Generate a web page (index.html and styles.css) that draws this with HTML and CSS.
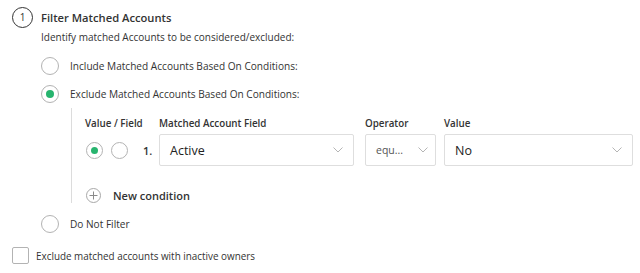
FILE: index.html
```html
<!DOCTYPE html>
<html lang="en">
<head>
  <meta charset="UTF-8">
  <meta name="viewport" content="width=device-width, initial-scale=1.0">
  <title>Filter Matched Accounts</title>
  <link rel="stylesheet" href="styles.css">
</head>
<body>
  <div class="painel">
    <div class="passo">
      <span class="numero">1</span>
      <b class="titulo">Filter Matched Accounts</b>
    </div>
    <p class="descricao">Identify matched Accounts to be considered/excluded:</p>

    <div class="opcoes">
      <label class="opcao">
        <span class="radio"></span>
        <span>Include Matched Accounts Based On Conditions:</span>
      </label>
      <label class="opcao">
        <span class="radio marcado"></span>
        <span>Exclude Matched Accounts Based On Conditions:</span>
      </label>
    </div>

    <div class="condicoes">
      <div class="linha rotulos">
        <span class="col-tipo">Value / Field</span>
        <span class="col-campo">Matched Account Field</span>
        <span class="col-operador">Operator</span>
        <span class="col-valor">Value</span>
      </div>
      <div class="linha">
        <div class="col-tipo tipo">
          <span class="radio pequeno marcado"></span>
          <span class="radio pequeno"></span>
          <b class="indice">1.</b>
        </div>
        <div class="col-campo select">
          <span>Active</span>
          <svg class="seta" width="10" height="6" viewBox="0 0 10 6"><polyline points="0.5,0.5 5,5 9.5,0.5" fill="none" stroke="#b5b5b5" stroke-width="1"/></svg>
        </div>
        <div class="col-operador select curto">
          <span>equ...</span>
          <svg class="seta" width="10" height="6" viewBox="0 0 10 6"><polyline points="0.5,0.5 5,5 9.5,0.5" fill="none" stroke="#b5b5b5" stroke-width="1"/></svg>
        </div>
        <div class="col-valor select">
          <span>No</span>
          <svg class="seta" width="10" height="6" viewBox="0 0 10 6"><polyline points="0.5,0.5 5,5 9.5,0.5" fill="none" stroke="#b5b5b5" stroke-width="1"/></svg>
        </div>
      </div>
      <div class="nova">
        <svg class="mais" width="15" height="15" viewBox="0 0 15 15">
          <circle cx="7.5" cy="7.5" r="7" fill="none" stroke="#a8a8a8" stroke-width="1"/>
          <line x1="7.5" y1="3.5" x2="7.5" y2="11.5" stroke="#8a8a8a" stroke-width="1"/>
          <line x1="3.5" y1="7.5" x2="11.5" y2="7.5" stroke="#8a8a8a" stroke-width="1"/>
        </svg>
        <b>New condition</b>
      </div>
    </div>

    <div class="opcoes">
      <label class="opcao">
        <span class="radio"></span>
        <span>Do Not Filter</span>
      </label>
    </div>

    <label class="caixa-check">
      <span class="check"></span>
      <span>Exclude matched accounts with inactive owners</span>
    </label>
  </div>
</body>
</html>
```

FILE: styles.css
```css
body {
  margin: 0;
  font-family: "Open Sans", Arial, Helvetica, sans-serif;
  color: #333;
  background-color: #fff;
}
.painel {
  padding: 7px 0 0 12px;
}
.passo {
  display: flex;
  align-items: center;
  gap: 8px;
  height: 20px;
}
.numero {
  width: 19px;
  height: 19px;
  border: 1px solid #333;
  border-radius: 50%;
  display: flex;
  align-items: center;
  justify-content: center;
  font-size: 10px;
}
.titulo {
  font-size: 11.2px;
  font-weight: 600;
}
.descricao {
  margin: 2px 0 0 29px;
  font-size: 10px;
  line-height: 16px;
}
.opcoes {
  margin: 12px 0 0 29px;
  display: flex;
  flex-direction: column;
  gap: 10px;
}
.opcao {
  display: flex;
  align-items: center;
  gap: 11px;
  font-size: 10.1px;
  height: 18px;
}
.radio {
  box-sizing: border-box;
  width: 18px;
  height: 18px;
  border: 1px solid #b3b3b3;
  border-radius: 50%;
  display: flex;
  align-items: center;
  justify-content: center;
  background: #fff;
}
.radio.marcado::after {
  content: "";
  width: 8px;
  height: 8px;
  border-radius: 50%;
  background-color: #27b46e;
}
.radio.pequeno {
  width: 17px;
  height: 17px;
}
.radio.pequeno.marcado::after {
  width: 7px;
  height: 7px;
}
.condicoes {
  margin: 5px 0 0 59px;
  border-left: 1px solid #dcdcdc;
  padding: 8px 0 0 13px;
}
.linha {
  display: flex;
  align-items: center;
}
.rotulos {
  font-size: 9.8px;
  font-weight: 600;
  line-height: 16px;
  margin-bottom: 2px;
  color: #333;
}
.col-tipo {
  width: 74px;
}
.col-campo {
  width: 195px;
  margin-right: 11px;
}
.col-operador {
  width: 71px;
  margin-right: 8px;
}
.col-valor {
  width: 189px;
}
.tipo {
  display: flex;
  align-items: center;
  gap: 8px;
  padding-left: 1px;
  box-sizing: border-box;
}
.indice {
  font-size: 11px;
  font-weight: 600;
  margin-left: 7px;
}
.select {
  box-sizing: border-box;
  height: 32px;
  border: 1px solid #dedede;
  border-radius: 2px;
  display: flex;
  align-items: center;
  justify-content: space-between;
  padding: 0 10px 0 10px;
  font-size: 12.5px;
  color: #222;
}
.curto {
  font-size: 10.5px;
  color: #555;
  padding-right: 7px;
}
.nova {
  display: flex;
  align-items: center;
  gap: 12px;
  margin-top: 22px;
  padding-left: 1px;
  height: 15px;
  font-size: 11px;
}
.nova b {
  font-weight: 600;
}
.caixa-check {
  display: flex;
  align-items: center;
  gap: 7px;
  margin-top: 14px;
  font-size: 9.9px;
}
.check {
  box-sizing: border-box;
  width: 17px;
  height: 17px;
  border: 1px solid #b3b3b3;
  border-radius: 2px;
}
```
